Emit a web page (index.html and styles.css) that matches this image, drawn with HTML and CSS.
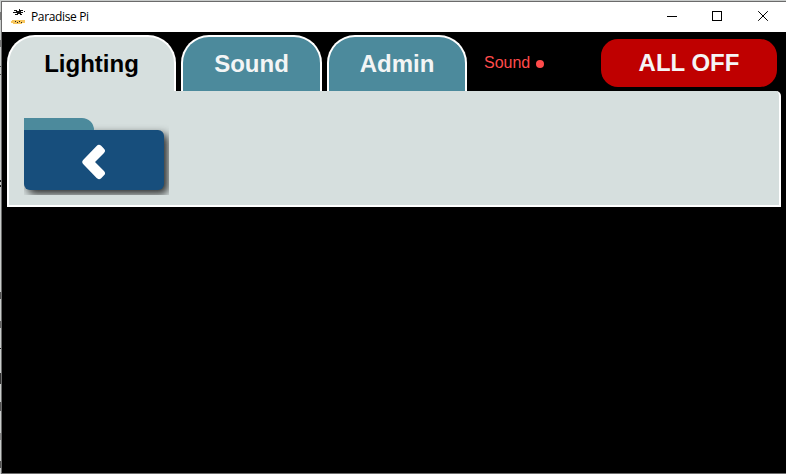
FILE: index.html
```html
<!DOCTYPE html>
<html lang="en">
<head>
<meta charset="utf-8">
<title>Paradise Pi</title>
<link rel="stylesheet" href="styles.css">
</head>
<body>
<div class="window">
  <header class="titlebar">
    <svg class="app-icon" width="16" height="16" viewBox="0 0 16 16" shape-rendering="crispEdges">
      <path fill="#111" d="M3 1h3v1h2V0h1v1h3v1h-2v1h2v1h-2v1h1v1H9V5H7v1H4V5h2V4H2V3h3V2H3zM13 2h1v1h-1z"/>
      <path fill="#f8c75e" d="M1 11h13v3h-3v1H2v-1H0v-2h1z"/>
      <path fill="#222" d="M4 12h1v1H4zM6 13h1v1H6zM8 12h1v1H8zM10 13h1v1h-1z"/>
    </svg>
    <span class="title">Paradise Pi</span>
    <svg class="controls" width="102" height="12" viewBox="0 0 102 12" fill="none" stroke="#000">
      <path d="M0 6.5h10M45.5 1.5h9v9h-9z" shape-rendering="crispEdges"/>
      <path d="M91.2 1.2l9.6 9.6M100.8 1.2l-9.6 9.6"/>
    </svg>
  </header>
  <main class="app">
    <nav class="tabs">
      <div class="tab tab-lighting active">Lighting</div>
      <div class="tab tab-sound">Sound</div>
      <div class="tab tab-admin">Admin</div>
      <div class="status">Sound <i class="dot"></i></div>
      <div class="all-off">ALL OFF</div>
    </nav>
    <section class="panel">
      <div class="folder">
        <div class="folder-tab"></div>
        <div class="folder-body">
          <svg width="24" height="36" viewBox="0 0 24 36">
            <path fill="#fff" d="M1.1 16.1L14.6 2a3.4 3.4 0 0 1 4.6-.2l2.6 2.6a3.2 3.2 0 0 1 .2 4.6L13 18l9 9a3.2 3.2 0 0 1-.2 4.6l-2.6 2.6a3.4 3.4 0 0 1-4.6-.2L1.1 19.9a2.8 2.8 0 0 1 0-3.8z"/>
          </svg>
        </div>
      </div>
    </section>
  </main>
</div>
</body>
</html>
```
FILE: styles.css
```css
* { box-sizing: border-box; }
body {
  margin: 0;
  height: 474px;
  overflow: hidden;
  padding: 1px 0 0 1px;
  /* Edge of the page behind the window */
  background: linear-gradient(#c9cccb 12px, #777 12px 20px, #c9cccb 20px 40px, #777 40px 47px, #c9cccb 47px 66px, #555 66px 67px, #c9cccb 67px 74px, #555 74px 75px, #c9cccb 75px 180px, #222 180px 182px, #c9cccb 182px 185px, #222 185px 187px, #c9cccb 187px 292px, #555 292px 299px, #c9cccb 299px 321px, #666 321px 328px, #c9cccb 328px 348px, #222 348px 349px, #c9cccb 349px 373px, #333 373px 384px, #c9cccb 384px 402px, #555 402px 411px, #c9cccb 411px 433px, #888 433px 440px, #c9cccb 440px 461px, #555 461px 468px, #c9cccb 468px);
  font-family: "Liberation Sans", Arial, sans-serif;
}
.window {
  height: 473px;
  border: solid #6b6b6b;
  border-width: 1px 0 1px 1px;
  background: #000;
}
.titlebar {
  display: flex;
  align-items: center;
  height: 30px;
  padding: 0 17px 0 9px;
  background: #fff;
}
.app-icon { margin-top: -1px; }
.title {
  margin-left: 4px;
  font: 12px/16px "Open Sans", "Noto Sans", sans-serif;
  letter-spacing: -0.35px;
  color: #000;
}
.controls { margin: -3px 0 0 auto; }
.app { padding: 3px 5px 0; }
.tabs { display: flex; height: 56px; }
.tab {
  height: 56px;
  margin-right: 5px;
  border: 2px solid #fff;
  border-bottom: 0;
  border-radius: 28px 28px 0 0;
  background: #4c8a9c;
  color: #f3f5f5;
  font-size: 24px;
  font-weight: bold;
  line-height: 54px;
  text-align: center;
}
.tab-lighting { width: 169px; }
.tab-sound { width: 141px; }
.tab-admin { width: 140px; }
.tab.active { background: #d6dfde; color: #000; }
.status {
  display: flex;
  align-items: center;
  height: 56px;
  margin-left: 12px;
  color: #ff4b4b;
  font-size: 16px;
}
.dot {
  width: 8px;
  height: 8px;
  margin: 1px 0 0 6px;
  border-radius: 50%;
  background: #ff4b4b;
}
.all-off {
  width: 176px;
  height: 48px;
  margin: 4px 4px 0 auto;
  border-radius: 17px;
  background: #bf0000;
  color: #f5f5f5;
  font-size: 24px;
  font-weight: bold;
  line-height: 48px;
  text-align: center;
}
.panel {
  width: 774px;
  height: 116px;
  padding: 27px 15px 0;
  border: 2px solid #fff;
  border-top: 0;
  border-top-right-radius: 5px;
  background: #d6dfde;
}
.folder {
  width: 145px;
  height: 77px;
  overflow: hidden;
}
.folder-tab {
  position: relative;
  z-index: 1;
  width: 70px;
  height: 12px;
  border-top-right-radius: 12px;
  background: #4c8a9c;
}
.folder-body {
  display: flex;
  align-items: center;
  justify-content: center;
  width: 140px;
  height: 60px;
  padding: 4px 1px 0 0;
  border-radius: 0 6px 6px 6px;
  background: #174e7c;
  box-shadow: 4px 4px 8px rgba(0, 0, 0, .8);
}
```
